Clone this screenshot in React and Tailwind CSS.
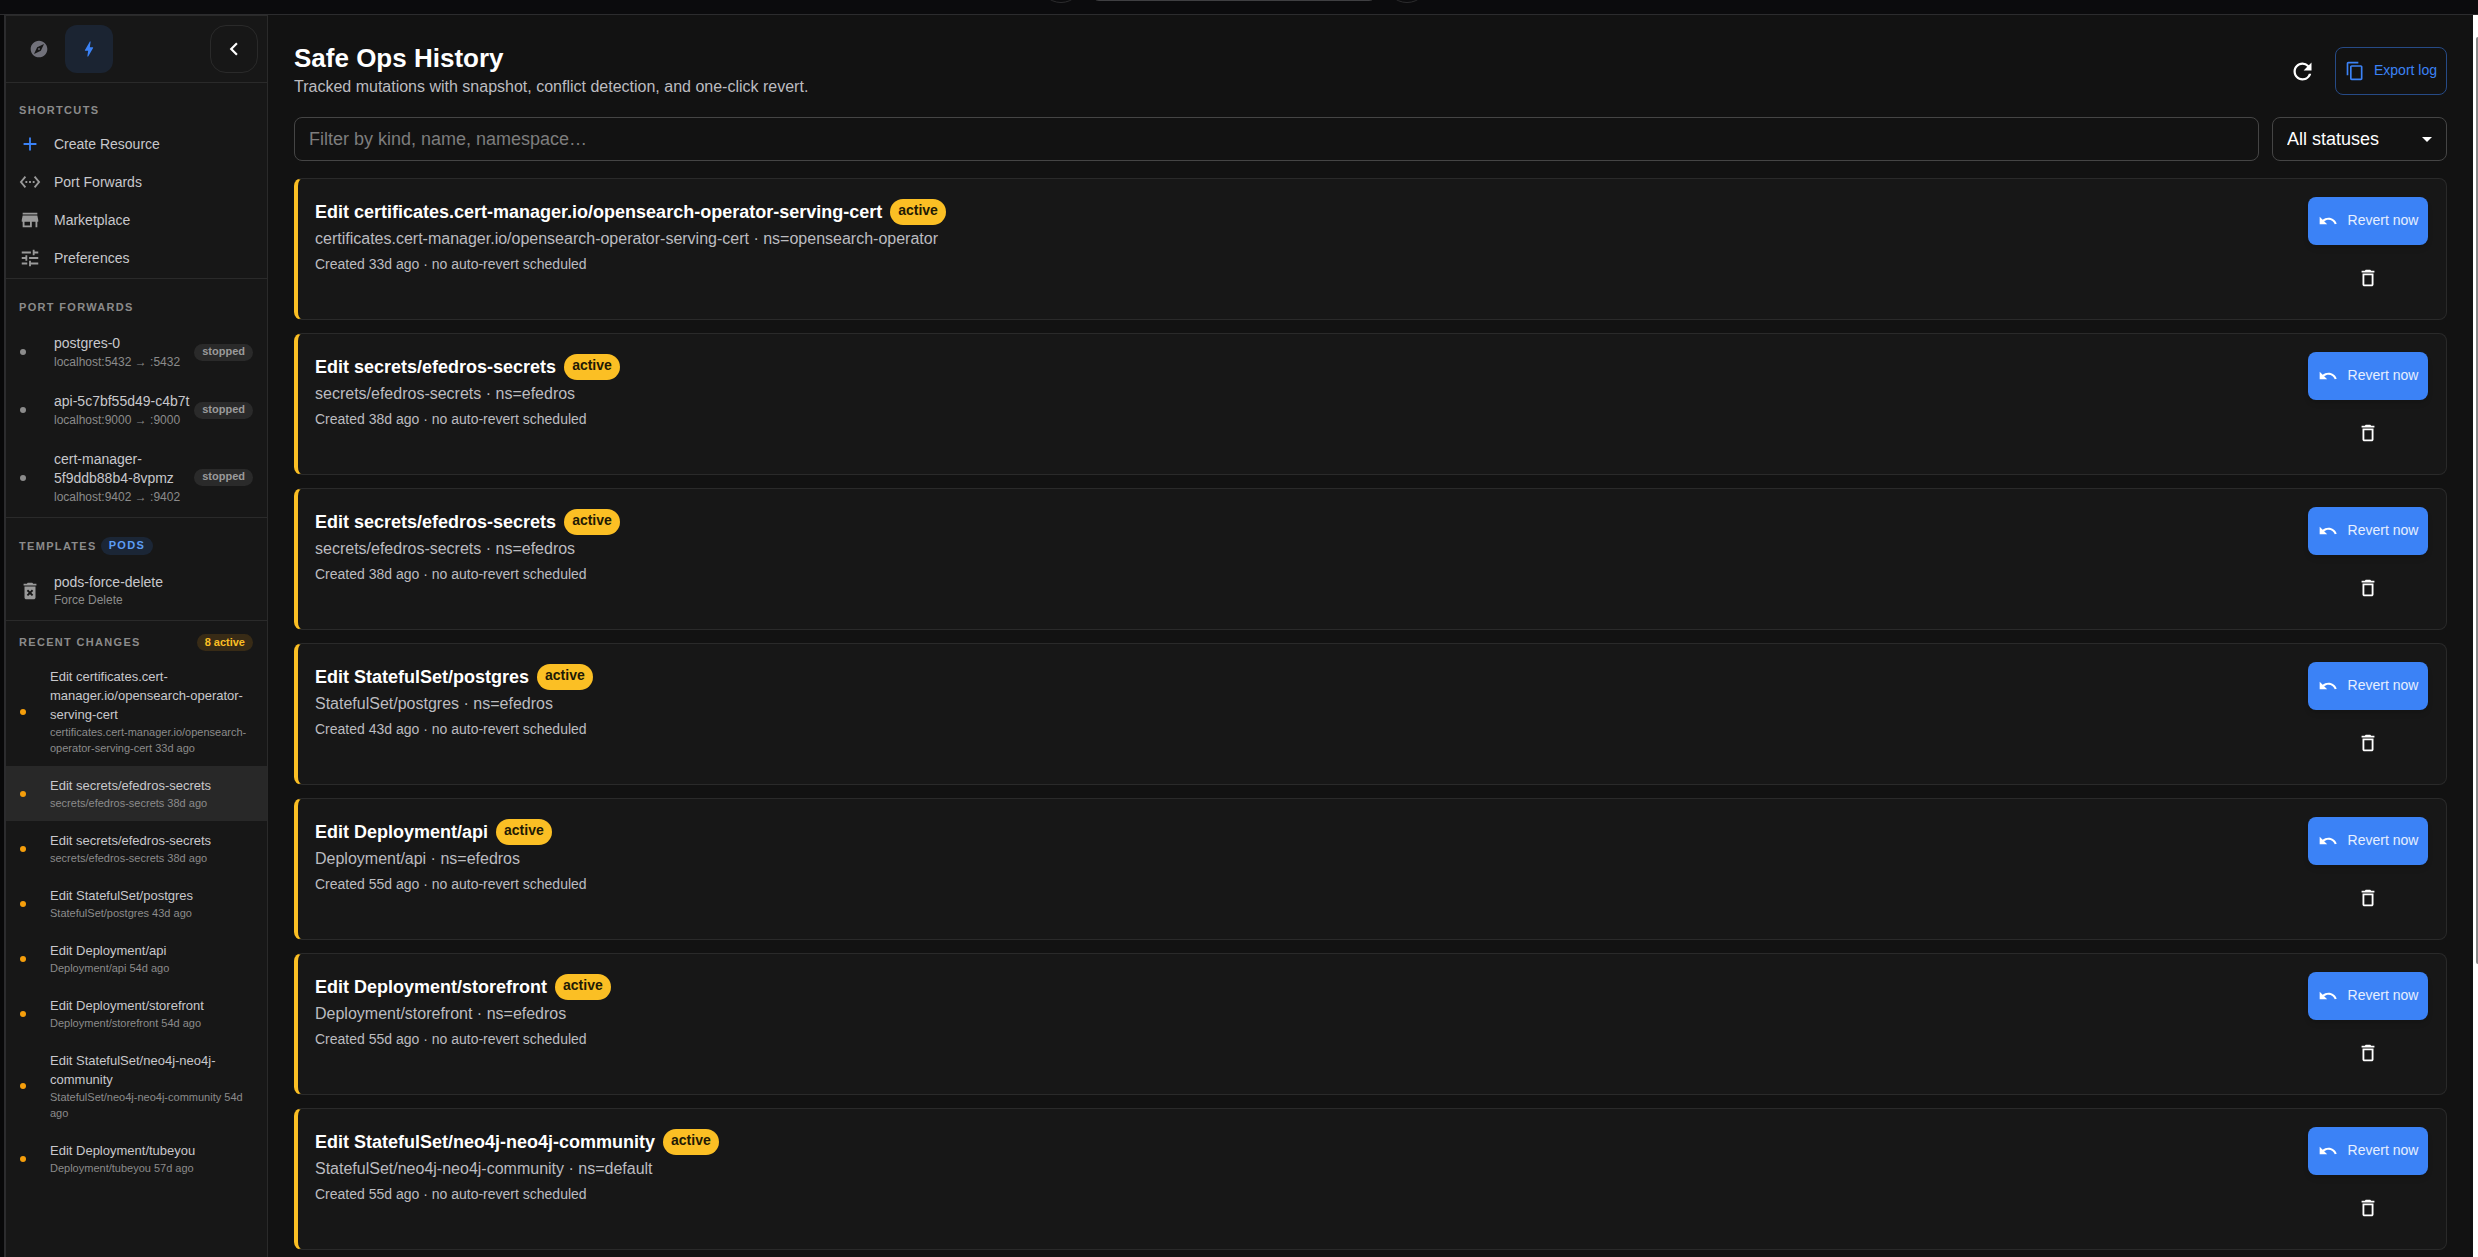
import {
  MdAdd,
  MdArrowDropDown,
  MdBolt,
  MdChevronLeft,
  MdContentCopy,
  MdDeleteForever,
  MdDeleteOutline,
  MdExplore,
  MdRefresh,
  MdSettingsEthernet,
  MdStore,
  MdTune,
  MdUndo,
} from "react-icons/md";

const shortcuts = [
  { label: "Create Resource", Icon: MdAdd, tone: "text-[#3b82f6]" },
  { label: "Port Forwards", Icon: MdSettingsEthernet, tone: "text-[#9a9a9a]" },
  { label: "Marketplace", Icon: MdStore, tone: "text-[#9a9a9a]" },
  { label: "Preferences", Icon: MdTune, tone: "text-[#9a9a9a]" },
];

const forwards = [
  { name: "postgres-0", route: "localhost:5432 → :5432" },
  { name: "api-5c7bf55d49-c4b7t", route: "localhost:9000 → :9000" },
  { name: "cert-manager-5f9ddb88b4-8vpmz", route: "localhost:9402 → :9402" },
];

const recent = [
  {
    title: "Edit certificates.cert-manager.io/opensearch-operator-serving-cert",
    detail: "certificates.cert-manager.io/opensearch-operator-serving-cert 33d ago",
  },
  { title: "Edit secrets/efedros-secrets", detail: "secrets/efedros-secrets 38d ago", hovered: true },
  { title: "Edit secrets/efedros-secrets", detail: "secrets/efedros-secrets 38d ago" },
  { title: "Edit StatefulSet/postgres", detail: "StatefulSet/postgres 43d ago" },
  { title: "Edit Deployment/api", detail: "Deployment/api 54d ago" },
  { title: "Edit Deployment/storefront", detail: "Deployment/storefront 54d ago" },
  { title: "Edit StatefulSet/neo4j-neo4j-community", detail: "StatefulSet/neo4j-neo4j-community 54d ago" },
  { title: "Edit Deployment/tubeyou", detail: "Deployment/tubeyou 57d ago" },
];

const operations = [
  { target: "certificates.cert-manager.io/opensearch-operator-serving-cert", ns: "opensearch-operator", age: "33d" },
  { target: "secrets/efedros-secrets", ns: "efedros", age: "38d" },
  { target: "secrets/efedros-secrets", ns: "efedros", age: "38d" },
  { target: "StatefulSet/postgres", ns: "efedros", age: "43d" },
  { target: "Deployment/api", ns: "efedros", age: "55d" },
  { target: "Deployment/storefront", ns: "efedros", age: "55d" },
  { target: "StatefulSet/neo4j-neo4j-community", ns: "default", age: "55d" },
];

function TopBar() {
  return (
    <header className="flex h-[15px] shrink-0 items-end justify-center gap-2 overflow-hidden border-b border-[#2c2c2e] bg-[#0b0b0d] pr-[10px] pb-[11px]">
      <button aria-label="Back" className="size-11 shrink-0 rounded-full border border-[#2c2c2e]" />
      <input aria-label="Search" className="mb-[2px] h-10 w-[286px] shrink-0 rounded-lg border border-[#3f3f42] bg-transparent" />
      <button aria-label="Forward" className="size-11 shrink-0 rounded-full border border-[#2c2c2e]" />
    </header>
  );
}

function SectionHeader({ title, children }) {
  return (
    <div className="flex h-[43px] items-center px-[13px] pt-3">
      <h2 className="text-[11px] leading-4 font-bold tracking-[0.12em] text-[#8b8b8b] uppercase">{title}</h2>
      {children}
    </div>
  );
}

function Sidebar() {
  return (
    <aside className="flex w-[264px] shrink-0 flex-col border-t border-r border-l-2 border-[#2a2a2a] border-l-[#2c2c2e] bg-[#171717]">
      <div className="flex h-[67px] shrink-0 items-center border-b border-[#2a2a2a] px-[9px]">
        <button aria-label="Explore" className="flex size-12 items-center justify-center rounded-xl text-[#71717a]">
          <MdExplore size={20} />
        </button>
        <button
          aria-label="Quick actions"
          className="ml-[2px] flex size-12 items-center justify-center rounded-xl bg-[#1b2432] text-[#3b82f6]"
        >
          <MdBolt size={20} />
        </button>
        <button
          aria-label="Collapse sidebar"
          className="ml-auto flex size-12 items-center justify-center rounded-2xl border border-[#2a2a2a] text-white"
        >
          <MdChevronLeft size={26} />
        </button>
      </div>

      <section className="-mt-px border-b border-[#2a2a2a] pb-px">
        <SectionHeader title="Shortcuts" />
        {shortcuts.map(({ label, Icon, tone }) => (
          <button key={label} className="flex h-[38px] w-full items-center gap-[13px] px-[13px] text-left">
            <Icon size={22} className={tone} />
            <span className="text-sm text-[#c8c8cc]">{label}</span>
          </button>
        ))}
      </section>

      <section className="border-b border-[#2a2a2a] pb-px">
        <SectionHeader title="Port Forwards" />
        <div className="pt-px">
          {forwards.map(({ name, route }) => (
            <button key={name} className="flex w-full items-center px-[14px] py-[11px] text-left">
              <span className="mr-7 size-[6px] shrink-0 rounded-full bg-[#8b8b8b]" />
              <span className="min-w-0 flex-1">
                <span className="block text-sm leading-[19px] text-[#c8c8cc]">{name}</span>
                <span className="mt-px block text-xs leading-4 whitespace-nowrap text-[#8b8b8b]">{route}</span>
              </span>
              <span className="shrink-0 rounded-full bg-[#2a2a2a] px-2 pb-[2px] text-[11px] leading-[15px] font-bold text-[#9a9a9a]">
                stopped
              </span>
            </button>
          ))}
        </div>
      </section>

      <section className="border-b border-[#2a2a2a]">
        <SectionHeader title="Templates">
          <span className="ml-1 rounded-full bg-[#1b2636] px-2 pb-[2px] text-[11px] leading-4 font-bold tracking-[0.12em] text-[#5b9df5]">
            PODS
          </span>
        </SectionHeader>
        <button className="flex w-full items-center gap-[13px] px-[13px] py-3 text-left">
          <MdDeleteForever size={22} className="text-[#9a9a9a]" />
          <span>
            <span className="block text-sm leading-[19px] text-[#c8c8cc]">pods-force-delete</span>
            <span className="block text-xs leading-4 text-[#8b8b8b]">Force Delete</span>
          </span>
        </button>
      </section>

      <section>
        <div className="flex h-9 items-center justify-between pt-[6px] pr-[14px] pl-[13px]">
          <h2 className="text-[11px] leading-4 font-bold tracking-[0.12em] text-[#8b8b8b] uppercase">Recent Changes</h2>
          <span className="rounded-full bg-[#382b16] px-2 pb-px text-[11px] leading-4 font-bold text-[#fbbf24]">8 active</span>
        </div>
        {recent.map(({ title, detail, hovered }, i) => (
          <button
            key={i}
            className={`flex w-full items-center px-[14px] py-[10px] text-left ${hovered ? "bg-[#282828]" : ""}`}
          >
            <span className="mr-6 size-[6px] shrink-0 rounded-full bg-[#f59e0b]" />
            <span className="min-w-0 flex-1">
              <span className="block text-[13px] leading-[19px] text-[#c8c8cc]">{title}</span>
              <span className="block text-[11px] leading-4 text-[#8b8b8b]">{detail}</span>
            </span>
          </button>
        ))}
      </section>
    </aside>
  );
}

function OperationCard({ target, ns, age }) {
  return (
    <article className="flex h-[142px] shrink-0 justify-between rounded-lg border border-l-4 border-[#2a2a2a] border-l-[#fbbf24] bg-[#171717] pt-[18px] pr-[18px] pl-[17px]">
      <div>
        <div className="flex h-[30px] items-center gap-2">
          <h3 className="text-lg leading-6 font-bold text-white">Edit {target}</h3>
          <span className="h-[26px] rounded-full bg-[#fbbf24] px-2 text-sm leading-[23px] font-bold text-[#1f1a05]">active</span>
        </div>
        <p className="text-base leading-6 text-[#bcbcc0]">
          {target} · ns={ns}
        </p>
        <p className="text-sm leading-[26px] text-[#bcbcc0]">
          Created {age} ago · no auto-revert scheduled
        </p>
      </div>
      <div className="flex flex-col items-center gap-[9px]">
        <button className="flex h-12 w-[120px] items-center justify-center gap-[10px] rounded-lg bg-[#3b82f6] text-sm text-[#e6efff] shadow-md">
          <MdUndo size={20} className="text-white" />
          <span className="pb-[3px] whitespace-nowrap">Revert now</span>
        </button>
        <button aria-label="Delete entry" className="flex size-12 items-center justify-center text-white">
          <MdDeleteOutline size={22} />
        </button>
      </div>
    </article>
  );
}

export default function App() {
  return (
    <div className="flex h-screen flex-col overflow-hidden bg-[#080809] font-['Liberation_Sans',Arial,sans-serif]">
      <TopBar />
      <div className="flex min-h-0 flex-1 pl-1">
        <Sidebar />
        <main className="flex min-w-0 flex-1 flex-col overflow-hidden bg-[#121212] px-[26px] pt-[27px]">
          <div className="flex items-center justify-between pb-[17px]">
            <div>
              <h1 className="text-[26px] leading-8 font-bold text-white">Safe Ops History</h1>
              <p className="text-base leading-[26px] text-[#bcbcc0]">
                Tracked mutations with snapshot, conflict detection, and one-click revert.
              </p>
            </div>
            <div className="flex items-center gap-[9px]">
              <button aria-label="Refresh" className="flex size-12 items-center justify-center text-white">
                <MdRefresh size={27} />
              </button>
              <button className="flex h-12 w-28 items-center justify-center gap-[9px] rounded-lg border border-[#264a86] text-sm text-[#3b82f6]">
                <MdContentCopy size={20} />
                <span className="pb-[3px] whitespace-nowrap">Export log</span>
              </button>
            </div>
          </div>

          <div className="flex gap-[13px] pb-[17px]">
            <input
              type="text"
              aria-label="Filter operations"
              placeholder="Filter by kind, name, namespace…"
              className="h-11 min-w-0 flex-1 rounded-lg border border-[#454545] bg-transparent px-[14px] text-lg text-white placeholder:text-[#7d7d7d]"
            />
            <div className="relative w-[175px]">
              <select
                aria-label="Status"
                className="h-11 w-full appearance-none rounded-lg border border-[#454545] bg-transparent px-[14px] text-lg text-white"
              >
                <option>All statuses</option>
              </select>
              <MdArrowDropDown size={24} className="pointer-events-none absolute top-[10px] right-2 text-white" />
            </div>
          </div>

          <div className="flex flex-col gap-[13px]">
            {operations.map((op, i) => (
              <OperationCard key={i} {...op} />
            ))}
          </div>
        </main>
        <div className="flex w-[5px] shrink-0 justify-end bg-white pt-[22px]">
          <div className="h-[76%] w-[2px] rounded-l bg-[#8b8b8b]" />
        </div>
      </div>
    </div>
  );
}
